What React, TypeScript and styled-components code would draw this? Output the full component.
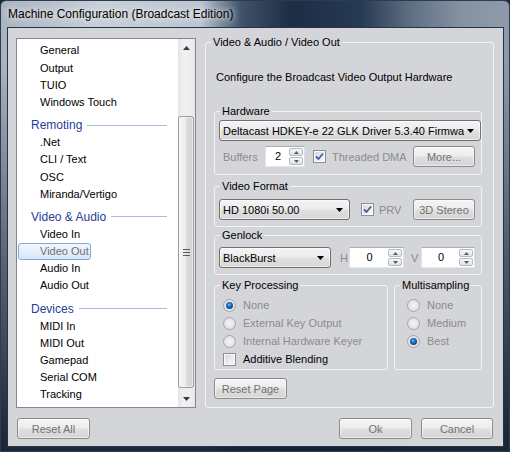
import React from 'react';
import styled, { createGlobalStyle } from 'styled-components';

const GlobalStyle = createGlobalStyle`
  html, body { margin: 0; padding: 0; }
  body {
    font-family: "Liberation Sans", Arial, sans-serif;
    font-size: 11px;
    color: #000;
    background: #1b2839;
  }
`;

const Window = styled.div`
  width: 510px;
  height: 452px;
  box-sizing: border-box;
  display: flex;
  flex-direction: column;
  border: 1px solid #2c3b4f;
  border-radius: 6px 6px 0 0;
  overflow: hidden;
  background:
    linear-gradient(180deg, rgba(0,0,0,0) 0px, rgba(0,0,0,0) 60px, rgba(22,34,52,0.55) 260px, rgba(20,31,48,0.95) 440px),
    linear-gradient(90deg, #aab4c0 0px, #c8cfd7 100px, #bcc5cf 200px, #40536b 240px, #1c2e46 290px, #273a53 360px, #5f6f83 410px, #8592a2 460px, #8f9bab 510px);
`;

const TitleBar = styled.div`
  height: 26px;
  padding-left: 7px;
  display: flex;
  align-items: center;
`;

const Title = styled.span`
  font-size: 12px;
  color: #000;
  text-shadow: 0 0 6px rgba(255,255,255,0.9), 0 0 10px rgba(255,255,255,0.6);
`;

const Client = styled.div`
  flex: 1;
  margin: 0 5px 4px 6px;
  border: 1px solid #243449;
  background: #d4d5d9;
  padding: 7px 9px 7px 8px;
  display: grid;
  grid-template-columns: 180px 289px;
  grid-template-rows: 1fr 21px;
  column-gap: 9px;
  row-gap: 10px;
  min-height: 0;
`;

/* ---------- left list ---------- */

const ListBox = styled.div`
  margin-top: 3px;
  border: 1px solid #828790;
  background: #fff;
  display: flex;
  min-height: 0;
`;

const ListItems = styled.div`
  flex: 1;
  overflow: hidden;
  padding-top: 3.4px;
`;

const Header = styled.div`
  display: flex;
  align-items: center;
  padding: 7px 11px 2px 14px;
  line-height: 14px;
  font-size: 12px;
  color: #1f3d98;
  &::after {
    content: '';
    flex: 1;
    height: 1px;
    background: #a9bbe2;
    margin-left: 5px;
  }
`;

const Item = styled.div`
  height: 17.2px;
`;

const ItemLabel = styled.span<{ $selected?: boolean }>`
  display: inline-block;
  box-sizing: border-box;
  height: 100%;
  margin-left: 1px;
  padding: 0 1px 0 21px;
  line-height: 15.2px;
  border: 1px solid ${p => (p.$selected ? '#86a9d4' : 'transparent')};
  border-radius: 3px;
  background: ${p => (p.$selected ? 'linear-gradient(#f2f7fe, #d6e6f9)' : 'transparent')};
  color: ${p => (p.$selected ? '#6f6f6f' : '#000')};
`;

const ScrollBar = styled.div`
  width: 17px;
  display: flex;
  flex-direction: column;
  background: linear-gradient(90deg, #e4e4e4, #f1f1f1 35%, #efefef 70%, #e6e6e6);
`;

const ScrollArrow = styled.div`
  height: 17px;
  display: flex;
  align-items: center;
  justify-content: center;
`;

const Track = styled.div`
  flex: 1;
  display: flex;
  flex-direction: column;
`;

const Thumb = styled.div`
  flex: 1;
  margin: 60px 1px 2px 0;
  border: 1px solid #9a9a9a;
  border-radius: 3px;
  background: linear-gradient(90deg, #f5f5f5, #ececec 50%, #dcdcdc 51%, #d2d2d2);
  box-shadow: inset 0 0 0 1px rgba(255,255,255,0.6);
  display: flex;
  align-items: center;
  justify-content: center;
`;

/* ---------- buttons ---------- */

const Button = styled.button<{ $w: number }>`
  width: ${p => p.$w}px;
  height: 21px;
  box-sizing: border-box;
  flex: none;
  padding: 0;
  border: 1px solid #8b8b8b;
  border-radius: 3px;
  background: linear-gradient(#f5f5f5 0%, #ececec 45%, #dedede 55%, #d5d5d5 100%);
  box-shadow: inset 0 0 0 1px rgba(255,255,255,0.55);
  font: 11px "Liberation Sans", Arial, sans-serif;
  color: #727272;
`;

const LeftActions = styled.div`
  display: flex;
  padding-left: 1px;
`;

const RightActions = styled.div`
  display: flex;
  justify-content: flex-end;
  gap: 9px;
  padding-right: 1px;
`;

/* ---------- group boxes ---------- */

const Group = styled.fieldset<{ $mt?: number; $w?: number }>`
  margin: ${p => p.$mt ?? 0}px 0 0 0;
  padding: 0;
  min-width: 0;
  box-sizing: border-box;
  border: 1px solid #f2f3f5;
  border-radius: 3px;
  ${p => (p.$w ? `width: ${p.$w}px; flex: none;` : '')}
`;

const Legend = styled.legend`
  margin-left: 5px;
  padding: 0 2px;
  line-height: 14px;
  font-size: 11px;
  color: #000;
`;

const Body = styled.div<{ $pad: string }>`
  padding: ${p => p.$pad};
`;

const Desc = styled.div`
  margin: 0 0 20px 2px;
  line-height: 14px;
`;

const Row = styled.div<{ $mt?: number }>`
  display: flex;
  align-items: center;
  height: 21px;
  margin-top: ${p => p.$mt ?? 0}px;
`;

const Combo = styled.div<{ $w?: number }>`
  ${p => (p.$w ? `width: ${p.$w}px; flex: none;` : 'flex: 1;')}
  height: 21px;
  box-sizing: border-box;
  border: 1px solid #707070;
  border-radius: 3px;
  background: linear-gradient(#f4f4f4 0%, #ececec 48%, #e0e0e0 52%, #d6d6d6 100%);
  box-shadow: inset 0 0 0 1px rgba(255,255,255,0.6);
  display: flex;
  align-items: center;
  gap: 3px;
  padding: 0 6px 0 3px;
`;

const ComboText = styled.span`
  flex: 1;
  white-space: nowrap;
  overflow: hidden;
`;

const Label = styled.span<{ $w?: number; $pl?: number; $dim?: boolean }>`
  ${p => (p.$w ? `width: ${p.$w}px;` : '')}
  flex: none;
  box-sizing: border-box;
  padding-left: ${p => p.$pl ?? 0}px;
  color: ${p => (p.$dim ? '#8b8b8b' : '#000')};
  white-space: nowrap;
`;

const Spin = styled.div<{ $w: number }>`
  width: ${p => p.$w}px;
  height: 21px;
  box-sizing: border-box;
  flex: none;
  border: 1px solid;
  border-color: #abadb3 #dbdfe6 #e3e9ef #e2e3ea;
  background: #fff;
  display: flex;
  padding: 1px;
`;

const SpinValue = styled.span`
  flex: 1;
  text-align: center;
  line-height: 17px;
`;

const SpinButtons = styled.div`
  width: 14px;
  display: flex;
  flex-direction: column;
  gap: 1px;
`;

const SpinBtn = styled.div`
  flex: 1;
  border: 1px solid #b6b9be;
  border-radius: 2px;
  background: linear-gradient(#f7f7f7, #e0e2e5);
  display: flex;
  align-items: center;
  justify-content: center;
`;

const CheckBox = styled.span<{ $ml?: number }>`
  width: 13px;
  height: 13px;
  box-sizing: border-box;
  flex: none;
  margin-left: ${p => p.$ml ?? 0}px;
  border: 1px solid #8f8f8f;
  background: linear-gradient(135deg, #d3d6da, #fbfbfb);
  box-shadow: inset 0 0 0 1px #fafafa;
  display: flex;
  align-items: center;
  justify-content: center;
`;

const Radio = styled.span<{ $on?: boolean }>`
  width: 13px;
  height: 13px;
  box-sizing: border-box;
  flex: none;
  border-radius: 50%;
  border: 1px solid #a4a6a9;
  background: radial-gradient(circle at 50% 50%, #f5f5f5 0%, #e3e4e6 60%, #d5d6d8 100%);
  display: flex;
  align-items: center;
  justify-content: center;
  &::after {
    content: '';
    display: ${p => (p.$on ? 'block' : 'none')};
    width: 7px;
    height: 7px;
    border-radius: 50%;
    background: radial-gradient(circle at 45% 40%, #7fc4f5 0%, #1d6cc0 35%, #0b3f80 75%, #0a2f60 100%);
  }
`;

const OptionRow = styled.div`
  display: flex;
  align-items: center;
  gap: 7px;
  height: 18px;
`;

const Split = styled.div`
  display: flex;
  gap: 6px;
  margin-top: 3px;
`;

const PageButtonRow = styled.div`
  margin-top: 8px;
  display: flex;
`;

/* ---------- small drawings ---------- */

const DownArrow = () => (
  <svg width="7" height="4" viewBox="0 0 7 4">
    <polygon points="0,0 7,0 3.5,4" fill="#000" />
  </svg>
);

const ScrollGlyph = ({ up }: { up?: boolean }) => (
  <svg width="7" height="4" viewBox="0 0 7 4">
    <polygon points={up ? '0,4 7,4 3.5,0' : '0,0 7,0 3.5,4'} fill="#3c3c3c" />
  </svg>
);

const SpinGlyph = ({ up }: { up?: boolean }) => (
  <svg width="5" height="3" viewBox="0 0 5 3">
    <polygon points={up ? '0,3 5,3 2.5,0' : '0,0 5,0 2.5,3'} fill="#4c5f80" />
  </svg>
);

const Grip = () => (
  <svg width="7" height="7" viewBox="0 0 7 7">
    <path d="M0 0.5H7M0 3.5H7M0 6.5H7" stroke="#5a5a5a" strokeWidth="1" />
  </svg>
);

const Tick = () => (
  <svg width="9" height="9" viewBox="0 0 9 9">
    <path d="M1 4.5 L3.5 7 L8 1.5" fill="none" stroke="#41609a" strokeWidth="1.8" />
  </svg>
);

const SpinBox = ({ w, value }: { w: number; value: string }) => (
  <Spin $w={w}>
    <SpinValue>{value}</SpinValue>
    <SpinButtons>
      <SpinBtn><SpinGlyph up /></SpinBtn>
      <SpinBtn><SpinGlyph /></SpinBtn>
    </SpinButtons>
  </Spin>
);

type Entry = { header?: string; label?: string; selected?: boolean };

const entries: Entry[] = [
  { label: 'General' },
  { label: 'Output' },
  { label: 'TUIO' },
  { label: 'Windows Touch' },
  { header: 'Remoting' },
  { label: '.Net' },
  { label: 'CLI / Text' },
  { label: 'OSC' },
  { label: 'Miranda/Vertigo' },
  { header: 'Video & Audio' },
  { label: 'Video In' },
  { label: 'Video Out', selected: true },
  { label: 'Audio In' },
  { label: 'Audio Out' },
  { header: 'Devices' },
  { label: 'MIDI In' },
  { label: 'MIDI Out' },
  { label: 'Gamepad' },
  { label: 'Serial COM' },
  { label: 'Tracking' },
];

export default function App() {
  return (
    <>
      <GlobalStyle />
      <Window>
        <TitleBar>
          <Title>Machine Configuration (Broadcast Edition)</Title>
        </TitleBar>
        <Client>
          <ListBox>
            <ListItems>
              {entries.map((e, i) =>
                e.header ? (
                  <Header key={i}>{e.header}</Header>
                ) : (
                  <Item key={i}>
                    <ItemLabel $selected={e.selected}>{e.label}</ItemLabel>
                  </Item>
                )
              )}
            </ListItems>
            <ScrollBar>
              <ScrollArrow><ScrollGlyph up /></ScrollArrow>
              <Track>
                <Thumb><Grip /></Thumb>
              </Track>
              <ScrollArrow><ScrollGlyph /></ScrollArrow>
            </ScrollBar>
          </ListBox>

          <Group>
            <Legend>Video &amp; Audio / Video Out</Legend>
            <Body $pad="21px 11px 8px 8px">
              <Desc>Configure the Broadcast Video Output Hardware</Desc>

              <Group>
                <Legend>Hardware</Legend>
                <Body $pad="2px 4px 7px 4px">
                  <Row>
                    <Combo>
                      <ComboText>Deltacast HDKEY-e 22 GLK Driver 5.3.40 Firmwa</ComboText>
                      <DownArrow />
                    </Combo>
                  </Row>
                  <Row $mt={5}>
                    <Label $w={46} $pl={4} $dim>Buffers</Label>
                    <SpinBox w={40} value="2" />
                    <CheckBox $ml={8}><Tick /></CheckBox>
                    <Label $pl={6} $dim>Threaded DMA</Label>
                    <span style={{ flex: 1 }} />
                    <Button $w={62} style={{ marginRight: 2 }}>More...</Button>
                  </Row>
                </Body>
              </Group>

              <Group $mt={4}>
                <Legend>Video Format</Legend>
                <Body $pad="6px 4px 6px 4px">
                  <Row>
                    <Combo $w={131}>
                      <ComboText>HD 1080i 50.00</ComboText>
                      <DownArrow />
                    </Combo>
                    <CheckBox $ml={11}><Tick /></CheckBox>
                    <Label $pl={5} $dim>PRV</Label>
                    <span style={{ flex: 1 }} />
                    <Button $w={62} style={{ marginRight: 2 }}>3D Stereo</Button>
                  </Row>
                </Body>
              </Group>

              <Group $mt={1}>
                <Legend>Genlock</Legend>
                <Body $pad="5px 4px 6px 4px">
                  <Row>
                    <Combo $w={112}>
                      <ComboText>BlackBurst</ComboText>
                      <DownArrow />
                    </Combo>
                    <Label $w={18} $pl={9} $dim>H</Label>
                    <SpinBox w={55} value="0" />
                    <Label $w={17} $pl={7} $dim>V</Label>
                    <SpinBox w={54} value="0" />
                  </Row>
                </Body>
              </Group>

              <Split>
                <Group $w={174}>
                  <Legend>Key Processing</Legend>
                  <Body $pad="4px 0 1px 8px">
                    <OptionRow><Radio $on /><Label $dim>None</Label></OptionRow>
                    <OptionRow><Radio /><Label $dim>External Key Output</Label></OptionRow>
                    <OptionRow><Radio /><Label $dim>Internal Hardware Keyer</Label></OptionRow>
                    <OptionRow><CheckBox /><Label>Additive Blending</Label></OptionRow>
                  </Body>
                </Group>
                <Group $w={88}>
                  <Legend>Multisampling</Legend>
                  <Body $pad="4px 0 1px 12px">
                    <OptionRow><Radio /><Label $dim>None</Label></OptionRow>
                    <OptionRow><Radio /><Label $dim>Medium</Label></OptionRow>
                    <OptionRow><Radio $on /><Label $dim>Best</Label></OptionRow>
                  </Body>
                </Group>
              </Split>

              <PageButtonRow>
                <Button $w={73}>Reset Page</Button>
              </PageButtonRow>
            </Body>
          </Group>

          <LeftActions>
            <Button $w={73}>Reset All</Button>
          </LeftActions>
          <RightActions>
            <Button $w={73}>Ok</Button>
            <Button $w={72}>Cancel</Button>
          </RightActions>
        </Client>
      </Window>
    </>
  );
}
